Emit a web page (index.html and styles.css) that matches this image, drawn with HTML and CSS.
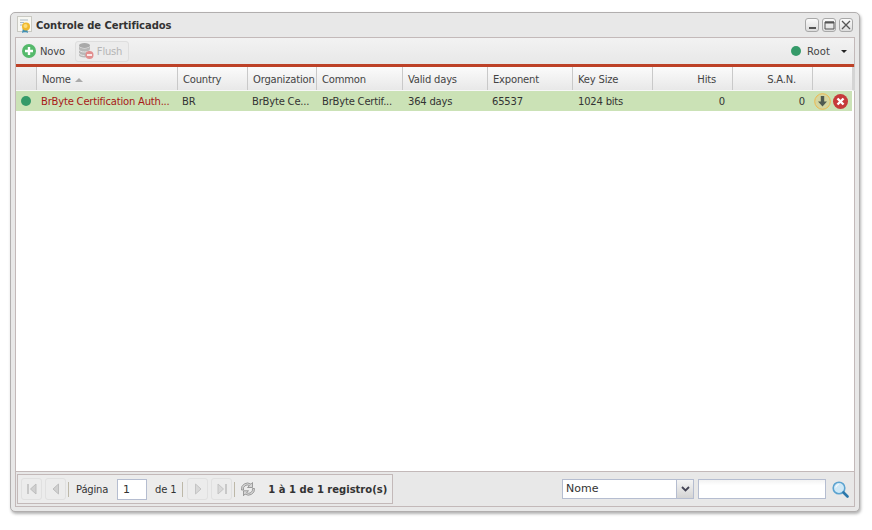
FILE: index.html
```html
<!DOCTYPE html>
<html lang="pt">
<head>
<meta charset="utf-8">
<title>Controle de Certificados</title>
<link rel="stylesheet" href="styles.css">
</head>
<body>
<div class="window">
  <div class="titlebar">
    <svg class="title-icon" width="16" height="18" viewBox="0 0 16 18"><rect x="0.5" y="0.5" width="14" height="15" fill="#f7f7f2" stroke="#c9c9c2"/><path d="M3 4h8M3 6.5h4M3 9h3" stroke="#a9b8c4"/><path d="M6 12l-1 5 2.5-1 .5 1 .5-1 2.500 1-1-5z" fill="#3f8fb5"/><circle cx="9" cy="10.500" r="4" fill="#f0b92e"/><circle cx="8.500" cy="10" r="2" fill="#fbdc7a"/></svg>
    <span class="title-text">Controle de Certificados</span>
    <div class="tools">
      <button class="tool"><svg width="9" height="9" viewBox="0 0 9 9"><rect x="1" y="6" width="7" height="2" fill="#555"/></svg></button>
      <button class="tool"><svg width="11" height="9" viewBox="0 0 11 9"><path d="M1 1h9v7H1z" fill="none" stroke="#555"/><path d="M1 1.500h9" stroke="#555" stroke-width="2"/></svg></button>
      <button class="tool"><svg width="10" height="10" viewBox="0 0 10 10"><path d="M1 1l8 8M9 1L1 9" stroke="#555" stroke-width="1.300"/></svg></button>
    </div>
  </div>
  <div class="panel">
    <div class="toolbar">
      <div class="tb-btn">
        <svg width="14" height="14" viewBox="0 0 14 14"><circle cx="7" cy="7" r="7" fill="#55b96b"/><path d="M7 3v8M3 7h8" stroke="#fff" stroke-width="2.400"/></svg>
        <span>Novo</span>
      </div>
      <div class="tb-btn disabled">
        <svg width="16" height="18" viewBox="0 0 16 18"><ellipse cx="6.500" cy="3.500" rx="5.500" ry="2.500" fill="#a9a9a9"/><path d="M1 4v9c0 1.500 2.500 2.500 5.500 2.500S12 14.500 12 13V4c0 1.500-2.500 2.500-5.500 2.500S1 5.500 1 4z" fill="#b8b8b8"/><path d="M1 7.500c0 1.500 2.500 2.500 5.500 2.500S12 9 12 7.500M1 11c0 1.500 2.500 2.500 5.500 2.500" fill="none" stroke="#e8e8e8"/><circle cx="11.500" cy="13" r="4" fill="#e28f8f"/><rect x="9" y="12.200" width="5" height="1.600" fill="#fff"/></svg>
        <span>Flush</span>
      </div>
      <div class="tb-spacer"></div>
      <div class="root-menu">
        <span class="dot"></span>
        <span>Root</span>
        <span class="caret"></span>
      </div>
    </div>
    <div class="grid">
      <div class="grid-head">
        <div class="hc"></div>
        <div class="hc">Nome <span class="sort"></span></div>
        <div class="hc">Country</div>
        <div class="hc">Organization</div>
        <div class="hc">Common</div>
        <div class="hc">Valid days</div>
        <div class="hc">Exponent</div>
        <div class="hc">Key Size</div>
        <div class="hc num">Hits</div>
        <div class="hc num">S.A.N.</div>
        <div class="hc"></div>
      </div>
      <div class="grid-row">
        <div class="c center"><span class="dot"></span></div>
        <div class="c red">BrByte Certification Auth...</div>
        <div class="c">BR</div>
        <div class="c">BrByte Ce...</div>
        <div class="c">BrByte Certif...</div>
        <div class="c">364 days</div>
        <div class="c">65537</div>
        <div class="c">1024 bits</div>
        <div class="c numc">0</div>
        <div class="c numc">0</div>
        <div class="c actions">
          <svg width="17" height="17" viewBox="0 0 17 17"><circle cx="8.500" cy="8.500" r="7.800" fill="#d4d6a0" stroke="#eeb84e"/><path d="M6.800 3h3.400v5.500h2.800l-4.500 5-4.500-5h2.800z" fill="#4f5a50"/></svg>
          <svg width="15" height="15" viewBox="0 0 15 15"><circle cx="7.500" cy="7.500" r="7.500" fill="#c63a3a"/><path d="M4.500 4.500l6 6M10.500 4.500l-6 6" stroke="#fff" stroke-width="2.400"/></svg>
        </div>
      </div>
    </div>
    <div class="footer">
      <div class="pager">
        <div class="pg-btn"><svg width="12" height="12" viewBox="0 0 12 12"><rect x="1" y="1" width="2" height="10" fill="#c8c8c8"/><path d="M10 1v10L4.500 6z" fill="#d0d0d0" stroke="#bdbdbd"/></svg></div>
        <div class="pg-btn"><svg width="12" height="12" viewBox="0 0 12 12"><path d="M8.500 1v10L3 6z" fill="#d0d0d0" stroke="#bdbdbd"/></svg></div>
        <span class="sep"></span>
        <span class="pg-label">Página</span>
        <input class="pg-input" type="text" value="1">
        <span class="pg-of">de 1</span>
        <span class="sep"></span>
        <div class="pg-btn"><svg width="12" height="12" viewBox="0 0 12 12"><path d="M3.500 1v10L9 6z" fill="#d8d8d8" stroke="#c4c4c4"/></svg></div>
        <div class="pg-btn"><svg width="12" height="12" viewBox="0 0 12 12"><path d="M2 1v10L7.500 6z" fill="#d8d8d8" stroke="#c4c4c4"/><rect x="9" y="1" width="2" height="10" fill="#c8c8c8"/></svg></div>
        <span class="sep"></span>
        <svg class="refresh" width="16" height="16" viewBox="0 0 16 16"><path d="M1.500 9A6 6 0 0 1 11 3.200L12.500 1.500V6.500H7.500L9.500 4.600A4 4 0 0 0 3.500 9z" fill="#d6d6d6" stroke="#8a8a8a" stroke-width=".8"/><path d="M14.500 7.500A6 6 0 0 1 5 13L3.500 14.800V9.800H8.500L6.500 11.700A4 4 0 0 0 12.500 7.500z" fill="#d6d6d6" stroke="#8a8a8a" stroke-width=".8"/></svg>
        <span class="pg-info">1 à 1 de 1 registro(s)</span>
      </div>
      <div class="search">
        <div class="combo"><span class="combo-val">Nome</span><span class="combo-btn"><svg width="9" height="6" viewBox="0 0 9 6"><path d="M1 1l3.500 3.500L8 1" fill="none" stroke="#445" stroke-width="1.800"/></svg></span></div>
        <input class="search-input" type="text">
        <svg class="lens" width="17" height="17" viewBox="0 0 17 17"><circle cx="7" cy="7" r="5.800" fill="#cfe8f6" stroke="#5ba3d0" stroke-width="1.600"/><path d="M3.800 6.500a3.500 3.500 0 0 1 3-3" stroke="#fff" fill="none"/><path d="M11.500 11.500l4 4" stroke="#2b78ab" stroke-width="2.600" stroke-linecap="round"/></svg>
      </div>
    </div>
  </div>
</div>
</body>
</html>
```
FILE: styles.css
```css
* { box-sizing: border-box; }
html, body { margin: 0; padding: 0; background: #fff; }
body {
  width: 872px;
  height: 530px;
  padding: 12px 12px 0 10px;
  font-family: "DejaVu Sans", Verdana, sans-serif;
  font-size: 10px;
  letter-spacing: -.2px;
  color: #333;
  overflow: hidden;
}
.window {
  width: 850px;
  height: 500px;
  display: flex;
  flex-direction: column;
  background: #e8e8e8;
  border: 1px solid #b1aeae;
  border-radius: 5px;
  box-shadow: 1px 2px 3px rgba(0,0,0,.3);
}
.titlebar {
  height: 24px;
  display: flex;
  align-items: center;
  padding: 0 6px 0 6px;
  flex: none;
}
.title-icon { margin-right: 3px; }
.title-text { font-weight: bold; font-size: 10px; color: #333; letter-spacing: -.05px; white-space: nowrap; }
.tools { margin-left: auto; display: flex; gap: 3px; }
.tool {
  width: 14px;
  height: 14px;
  padding: 0;
  display: flex;
  align-items: center;
  justify-content: center;
  background: linear-gradient(#fafafa, #dcdcdc);
  border: 1px solid #a8a8a8;
  border-radius: 3px;
}
.panel {
  flex: 1;
  margin: 0 4px 4px 4px;
  display: flex;
  flex-direction: column;
  border: 1px solid #c3b9b9;
  min-height: 0;
}
.toolbar {
  height: 26px;
  flex: none;
  display: flex;
  align-items: center;
  padding: 0 5px;
  gap: 3px;
  background: linear-gradient(#f2f2f2, #e8e8e8);
  border-bottom: 3px solid #bd4127;
  box-sizing: content-box;
}
.tb-btn {
  height: 21px;
  display: flex;
  align-items: center;
  gap: 4px;
  padding: 0 2px 0 1px;
  color: #444;
}
.tb-btn.disabled {
  color: #b5b5b5;
  border: 1px solid #dedede;
  border-radius: 3px;
  width: 54px;
  padding: 0 0 0 2px;
  gap: 3px;
  margin-left: 5px;
  background: #ececec;
}
.tb-spacer { flex: 1; }
.root-menu { display: flex; align-items: center; gap: 6px; padding-right: 2px; color: #444; letter-spacing: .1px; }
.dot {
  display: inline-block;
  width: 10px;
  height: 10px;
  border-radius: 50%;
  background: #359a69;
}
.root-menu .caret {
  margin-left: 5px;
  width: 0;
  height: 0;
  border: 3px solid transparent;
  border-top: 3px solid #222;
  border-bottom: 0;
}
.grid {
  flex: 1;
  min-height: 0;
  background: #fff;
  border-bottom: 1px solid #c3b9b9;
}
.grid-head, .grid-row {
  display: grid;
  grid-template-columns: 21px 141px 70px 69px 86px 85px 85px 80px 80px 80px 40px;
}
.grid-head {
  height: 24px;
  background: linear-gradient(#fbfbfb, #e8e8e8);
  border-bottom: 1px solid #f7f7f7;
  padding-right: 3px;
  width: 839px;
  border-right: 3px solid #d4d4d4;
}
.hc {
  display: flex;
  align-items: center;
  padding: 2px 5px 0;
  border-right: 1px solid #c9c9c9;
  color: #444;
  white-space: nowrap;
  overflow: hidden;
}
.hc:first-child { background: linear-gradient(#f0f0f0, #e4e4e4); }
.hc:last-child { border-right: 0; }
.hc.num { justify-content: flex-end; padding-right: 16px; }
.sort {
  margin-left: 4px;
  width: 0;
  height: 0;
  border: 4px solid transparent;
  border-bottom: 4px solid #aaa;
  border-top: 0;
}
.grid-row {
  height: 20px;
  width: 836px;
  background: #cbe2b6;
  align-items: center;
}
.c {
  padding: 0 0 0 4px;
  white-space: nowrap;
  color: #333;
}
.c:nth-child(5), .c:nth-child(6), .c:nth-child(8) { padding-left: 5px; }
.c.center { display: flex; align-items: center; justify-content: center; padding: 0 1px 0 0; }
.c.red { color: #a81818; }
.c.numc { text-align: right; padding-right: 8px; }
.c.actions { display: flex; align-items: center; gap: 2px; padding: 0 0 0 1px; }
.footer {
  height: 34px;
  flex: none;
  display: flex;
  align-items: center;
  justify-content: space-between;
  padding: 0 5px 0 1px;
  background: #e8e8e8;
}
.pager {
  display: flex;
  align-items: center;
  height: 30px;
  width: 376px;
  padding: 0 3px;
  border: 1px solid #c3b9b9;
  background: #ececec;
  white-space: nowrap;
  flex: none;
}
.pg-btn {
  width: 21px;
  height: 22px;
  margin-right: 3px;
  display: flex;
  align-items: center;
  justify-content: center;
  border: 1px solid #e0e0e0;
  border-radius: 3px;
  flex: none;
}
.sep { width: 1px; height: 15px; background: #bdb8a8; margin: 0 4px 0 -1px; flex: none; }
.pg-of + .sep { margin-left: 0; }
.pg-label { margin: 0 9px 0 3px; flex: none; }
.pg-input {
  width: 30px;
  height: 21px;
  border: 1px solid #b5bdd0;
  padding: 0 5px;
  font: inherit;
  font-size: 11px;
  color: #333;
  background: #fff;
  margin-right: 8px;
  flex: none;
}
.pg-of { margin-right: 6px; flex: none; }
.refresh { margin: 0 12px 0 1px; flex: none; }
.pg-info { font-weight: bold; font-size: 10px; color: #333; flex: none; letter-spacing: 0; }
.search { display: flex; align-items: center; }
.combo {
  width: 132px;
  height: 20px;
  display: flex;
  border: 1px solid #b5bdd0;
  background: #fff;
  margin-right: 4px;
}
.combo-val { flex: 1; padding-left: 3px; line-height: 18px; font-size: 11px; letter-spacing: 0; }
.combo-btn {
  width: 17px;
  display: flex;
  align-items: center;
  justify-content: center;
  background: linear-gradient(#f4f4f4, #d4d4d4);
  border-left: 1px solid #b5bdd0;
}
.search-input {
  width: 128px;
  height: 20px;
  border: 1px solid #b5bdd0;
  background: linear-gradient(#f3f3f3, #fff 30%);
  margin-right: 6px;
}
.lens { display: block; }
```
